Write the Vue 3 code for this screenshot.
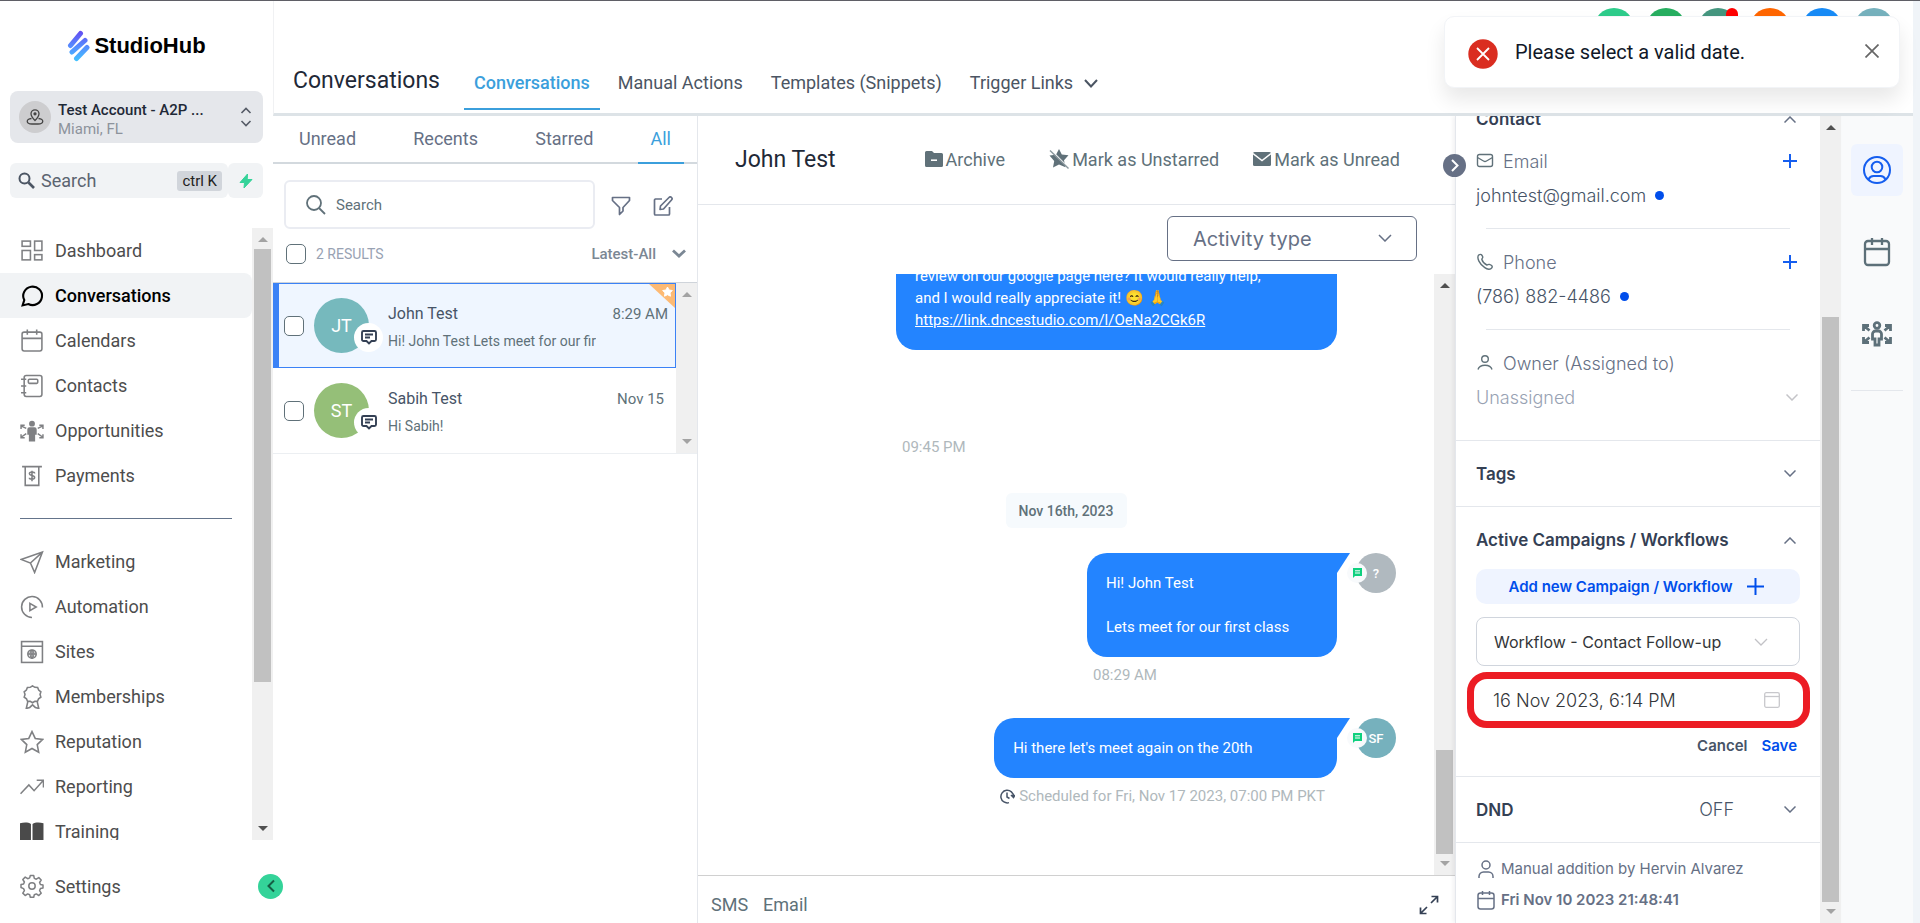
<script setup>
import { ref } from "vue";

const mainNav = [
  { name: "Dashboard", icon: '<rect x="2" y="2" width="8" height="5"/><rect x="14" y="2" width="7" height="9"/><rect x="2" y="11" width="8" height="9"/><rect x="14" y="15" width="7" height="5"/>' },
  { name: "Conversations", icon: '<path d="M2.500 20.500l1.600-5.100A9 8.800 0 1 1 8 19.200z" stroke-width="2"/>' },
  { name: "Calendars", icon: '<rect x="2" y="3" width="19" height="18" rx="2"/><path d="M2 9h19M7 .5v5M16 .5v5"/>' },
  { name: "Contacts", icon: '<rect x="4" y="1.500" width="17" height="20" rx="2"/><rect x="8" y="5" width="9" height="4" rx="1"/><path d="M1 5h5M1 11.500h5M1 18h5"/>' },
  { name: "Opportunities", icon: '<g fill="currentColor" stroke="none"><circle cx="11.500" cy="4.500" r="2.800"/><path d="M9 8h5a2 2 0 0 1 2 2v5h-1.500v6.500h-6V15H7v-5a2 2 0 0 1 2-2z"/></g><path d="M6 9L1 6.500M1 9.500V6h3.500M6 14l-5 3.500M1 14.500V18h3.500M17 9l5-2.500M22 9.500V6h-3.500M17 14l5 3.500M22 14.500V18h-3.500" stroke-width="1.400"/>' },
  { name: "Payments", icon: '<path d="M2 2.500h19M5 2.500v18h13v-18"/><path d="M14 9c0-1.500-5-2-5 .3 0 2.400 5 1.200 5 3.700 0 2.200-5 2-5 .2M11.500 6.500v10"/>' },
];

const moreNav = [
  { name: "Marketing", icon: '<path d="M1 9L21.500 2 14 21.500l-4-9zM10 12.500L21.500 2"/>' },
  { name: "Automation", icon: '<path d="M11.500 21.500A10 10 0 1 1 21.500 12"/><path d="M9.500 8l6 3.500-6 3.500z"/>' },
  { name: "Sites", icon: '<rect x="1.500" y="1.500" width="20" height="20"/><path d="M1.500 6h20M7.500 13.500h8M11.500 9.500v8"/><circle cx="11.500" cy="13.500" r="4"/><path d="M11.500 9.500c-2.500 2-2.500 6 0 8 2.500-2 2.500-6 0-8" stroke-width="1"/>' },
  { name: "Memberships", icon: '<path d="M12 .8l2.200 1.400 2.700.1 1 2.500 2.100 1.700-.8 2.500.8 2.600-2.200 1.600-1 2.400-2.600.1L12 17l-2.200-1.300-2.600-.1-1-2.400L4 11.600 4.800 9 4 6.500l2.100-1.700 1-2.500 2.700-.1z"/><path d="M7.500 16L6 22.500l3.300-1L12 19l2.700 2.500 3.300 1L16.500 16"/>' },
  { name: "Reputation", icon: '<path d="M11.500 1.500l3.100 6.600 7.100.9-5.200 5 1.400 7.300-6.400-3.600-6.400 3.600L6.500 14 1.300 9l7.100-.9z"/>' },
  { name: "Reporting", icon: '<path d="M.5 18l8-8.500 5 5.500L22.500 5M16 5h6.500v7"/>' },
  { name: "Training", icon: '<g fill="#4a4a4a" stroke="none"><path d="M0 3c4-1 8-1 10.500.8V21C8 19.500 4 19 0 20z"/><path d="M22.500 3c-4-1-8-1-10.500.8V21c2.500-1.500 6.500-2 10.500-1z"/></g>' },
];

const topTabs = ["Conversations", "Manual Actions", "Templates (Snippets)", "Trigger Links"];
const filters = ["Unread", "Recents", "Starred", "All"];
const circles = ["#2ecc8b", "#27ae60", "#45967f", "#ff6600", "#188bf6", "#76b1bd"];

const threads = ref([
  { id: 1, initials: "JT", name: "John Test", text: "Hi! John Test Lets meet for our first class", time: "8:29 AM", color: "#76b9bd", active: true },
  { id: 2, initials: "ST", name: "Sabih Test", text: "Hi Sabih!", time: "Nov 15", color: "#95bf78", active: false },
]);

const search = ref("");
const date = ref("16 Nov 2023, 6:14 PM");
const showToast = ref(true);
</script>

<template>
  <div class="app">
    <aside class="sidebar">
      <div class="logo">
        <svg width="23" height="32" viewBox="0 0 23 32">
          <defs>
            <linearGradient id="logoFill" x1="0" y1="0" x2="0" y2="32" gradientUnits="userSpaceOnUse">
              <stop offset="0" stop-color="#6547f0" />
              <stop offset=".55" stop-color="#5591ff" />
              <stop offset="1" stop-color="#3fc6ff" />
            </linearGradient>
          </defs>
          <g stroke="url(#logoFill)" stroke-width="5" stroke-linecap="round">
            <path d="M3.500 15.500L13.500 3.500M5 22L18 10.500M9.500 28.500L20 17.500" />
          </g>
        </svg>
        <span>StudioHub</span>
      </div>

      <button class="account">
        <span class="account-pin">
          <svg width="18" height="18" viewBox="0 0 18 18" fill="none" stroke="#444" stroke-width="1.300">
            <path d="M9 12.500C6.500 10 5 8 5 5.800a4 4 0 0 1 8 0C13 8 11.500 10 9 12.500z" />
            <circle cx="9" cy="5.800" r="1" fill="#444" />
            <path d="M5.500 10.500C-.5 11 0 16 6 16h6c6 0 6.500-5 .5-5.500" />
          </svg>
        </span>
        <span class="account-text">
          <b>Test Account - A2P ...</b>
          <small>Miami, FL</small>
        </span>
        <svg width="12" height="20" viewBox="0 0 12 20" fill="none" stroke="#555b66" stroke-width="1.600"><path d="M1.500 6L6 1.500 10.500 6M1.500 14L6 18.500 10.500 14" /></svg>
      </button>

      <div class="quick">
        <label class="quick-search">
          <svg width="18" height="18" viewBox="0 0 18 18" fill="none" stroke="#4b5563" stroke-width="2"><circle cx="6.500" cy="6.500" r="5" /><path d="M10.500 10.500L16 16" stroke-width="2.600" /></svg>
          <input type="text" placeholder="Search" aria-label="Search menu" />
          <kbd>ctrl K</kbd>
        </label>
        <button class="bolt" aria-label="Quick actions">
          <svg width="14" height="16" viewBox="0 0 14 16" fill="#34d399" stroke="#34d399" stroke-linejoin="round"><path d="M8.500 1L1 9.500h4.500L5 15l8-8.500H8.200z" /></svg>
        </button>
      </div>

      <div class="nav-wrap">
        <nav class="nav">
          <a v-for="item in mainNav" :key="item.name" href="#" :class="{ active: item.name === 'Conversations' }">
            <svg width="24" height="24" viewBox="0 0 23 23" fill="none" stroke="currentColor" stroke-width="1.500" v-html="item.icon"></svg>
            <span>{{ item.name }}</span>
          </a>
          <hr />
          <a v-for="item in moreNav" :key="item.name" href="#">
            <svg width="24" height="24" viewBox="0 0 23 23" fill="none" stroke="currentColor" stroke-width="1.500" v-html="item.icon"></svg>
            <span>{{ item.name }}</span>
          </a>
        </nav>
        <div class="bar">
          <i class="arrow up"></i>
          <div class="thumb nav-thumb"></div>
          <i class="arrow down dark"></i>
        </div>
      </div>

      <div class="settings">
        <a href="#">
          <svg width="24" height="24" viewBox="0 0 24 24" fill="none" stroke="currentColor" stroke-width="1.500" stroke-linejoin="round">
            <path d="M10.300 1.500h3.400l.6 2.900 2 .8 2.500-1.600 2.400 2.400-1.600 2.500.8 2 2.600.5v3l-2.600.6-.8 2 1.600 2.500-2.400 2.400-2.500-1.600-2 .8-.6 2.500h-3.400l-.6-2.500-2-.8-2.500 1.600-2.400-2.400 1.600-2.500-.8-2L1 13.500v-3l2.600-.5.8-2L2.800 5.500l2.400-2.400 2.500 1.600 2-.8z" />
            <circle cx="12" cy="12" r="3.200" />
          </svg>
          <span>Settings</span>
        </a>
        <button class="collapse" aria-label="Collapse menu">
          <svg width="10" height="14" viewBox="0 0 10 14" fill="none" stroke="#155e45" stroke-width="2"><path d="M8 1.500L2.500 7 8 12.500" /></svg>
        </button>
      </div>
    </aside>

    <div class="main">
      <header class="topbar">
        <h1>Conversations</h1>
        <nav class="tabs">
          <a v-for="(tab, i) in topTabs" :key="tab" href="#" :class="{ active: i === 0 }">
            {{ tab }}
            <svg v-if="i === 3" width="14" height="9" viewBox="0 0 14 9" fill="none" stroke="#4b5563" stroke-width="2"><path d="M1 1l6 6.500L13 1" /></svg>
          </a>
        </nav>
        <div class="circles">
          <button v-for="(c, i) in circles" :key="c" :style="{ background: c }" :aria-label="'Shortcut ' + (i + 1)">
            <svg v-if="i === 0" width="20" height="20" viewBox="0 0 20 20"><path d="M8 0h4v20H8z" fill="#fff" /></svg>
            <i v-if="i === 2" class="alert"></i>
          </button>
        </div>
      </header>

      <div class="columns">
        <section class="list">
          <div class="list-tabs">
            <button v-for="f in filters" :key="f" :class="{ active: f === 'All' }">{{ f }}</button>
          </div>
          <div class="list-search">
            <label>
              <svg width="20" height="20" viewBox="0 0 20 20" fill="none" stroke="#607179" stroke-width="1.800"><circle cx="8" cy="8" r="7" /><path d="M13 13l6 6" /></svg>
              <input v-model="search" type="text" placeholder="Search" aria-label="Search conversations" />
            </label>
            <button aria-label="Filter">
              <svg width="20" height="20" viewBox="0 0 20 20" fill="none" stroke="#667085" stroke-width="1.700" stroke-linejoin="round"><path d="M1.500 1.500h17v3L12 11.500V15l-3.500 3.500v-7l-7-7z" /></svg>
            </button>
            <button aria-label="New message">
              <svg width="20" height="20" viewBox="0 0 20 20" fill="none" stroke="#667085" stroke-width="1.700" stroke-linejoin="round"><path d="M9 3H2.500A1.200 1.200 0 0 0 1.500 4v14a1 1 0 0 0 1 1h13a1 1 0 0 0 1-1v-7" /><path d="M7 13.500l.5-3.500L16 1.500a1.500 1.500 0 0 1 2.500 2.500L10.500 13z" /></svg>
            </button>
          </div>
          <div class="results">
            <input id="all" type="checkbox" />
            <label for="all">2 RESULTS</label>
            <button>Latest-All
              <svg width="14" height="9" viewBox="0 0 14 9" fill="none" stroke="#7b8794" stroke-width="2.800"><path d="M1 1.500l6 5.500 6-5.500" /></svg>
            </button>
          </div>
          <div class="threads-wrap">
            <ul class="threads">
              <li v-for="t in threads" :key="t.id" :class="{ active: t.active }">
                <input type="checkbox" :aria-label="'Select ' + t.name" />
                <div class="avatar" :style="{ background: t.color }">
                  {{ t.initials }}
                  <span class="chan">
                    <svg width="16" height="15" viewBox="0 0 16 15" fill="none" stroke="#344054" stroke-width="1.900"><path d="M1 2.500A1.500 1.500 0 0 1 2.500 1h11A1.500 1.500 0 0 1 15 2.500v7a1.500 1.500 0 0 1-1.500 1.500H10.500L8 13.500 5.500 11h-3A1.500 1.500 0 0 1 1 9.500zM4 4.500h8M4 7.500h5" /></svg>
                  </span>
                </div>
                <div class="thread-text">
                  <div class="thread-top"><strong>{{ t.name }}</strong><time>{{ t.time }}</time></div>
                  <p>{{ t.text }}</p>
                </div>
                <svg v-if="t.active" class="corner" width="26" height="24" viewBox="0 0 26 24"><path d="M0 0h26v24z" fill="#fdba74" /><path d="M18.500 3l1.500 3 3.300.5-2.300 2.400.5 3.300-3-1.500-3 1.500.5-3.300-2.300-2.400L17 6z" fill="#fff" stroke="#fff" stroke-linejoin="round" /></svg>
              </li>
            </ul>
            <div class="bar">
              <i class="arrow up"></i>
              <i class="arrow down"></i>
            </div>
          </div>
        </section>

        <section class="chat">
          <div class="chat-head">
            <h2>John Test</h2>
            <button>
              <svg width="18" height="16" viewBox="0 0 18 16"><path d="M1.500 0H7l2 2h7.500A1.500 1.500 0 0 1 18 3.500v11a1.500 1.500 0 0 1-1.500 1.500h-15A1.500 1.500 0 0 1 0 14.500v-13A1.500 1.500 0 0 1 1.500 0z" fill="#607179" /><path d="M6 9.200h6" stroke="#fff" stroke-width="1.600" /></svg>
              Archive
            </button>
            <button>
              <svg width="20" height="20" viewBox="0 0 20 20"><path d="M10 0l2.800 5.500 6.700.7-4.500 5 1.500 7L10 15.500l-6 3 1.200-6.500L.5 6.500l6.500-.8z" fill="#607179" /><path d="M2 1l18 18" stroke="#fff" stroke-width="1.200" /><path d="M1 1.500l18.500 18" stroke="#8a979d" stroke-width="1.400" /></svg>
              Mark as Unstarred
            </button>
            <button>
              <svg width="18" height="14" viewBox="0 0 18 14"><rect width="18" height="14" rx="1.500" fill="#607179" /><path d="M0 1.500l9 7 9-7" fill="none" stroke="#fff" stroke-width="1.400" /></svg>
              Mark as Unread
            </button>
          </div>

          <div class="chat-filter">
            <div class="select">
              <select aria-label="Activity type"><option>Activity type</option></select>
              <svg width="14" height="8" viewBox="0 0 14 8" fill="none" stroke="#667085" stroke-width="1.500"><path d="M1 1l6 6 6-6" /></svg>
            </div>
          </div>

          <div class="log-wrap">
            <div class="log">
              <div class="msg first">
                <div class="stack">
                  <div class="bubble">Hey! Would you be so kind to leave us a<br />review on our google page here? It would really help,<br />and I would really appreciate it! 😊 🙏<br /><a href="#">https://link.dncestudio.com/l/OeNa2CGk6R</a></div>
                  <time>09:45 PM</time>
                </div>
              </div>
              <div class="day">Nov 16th, 2023</div>
              <div class="msg second">
                <div class="stack">
                  <div class="bubble tail">Hi! John Test<br /><br />Lets meet for our first class</div>
                  <time>08:29 AM</time>
                </div>
                <div class="face grey">?
                  <span><svg width="9" height="10" viewBox="0 0 9 10"><path d="M0 0h9v8H2L0 10z" fill="#0fd07f" /><path d="M2 2.800h5M2 5h5" stroke="#fff" /></svg></span>
                </div>
              </div>
              <div class="msg">
                <div class="stack">
                  <div class="bubble tail">Hi there let's meet again on the 20th</div>
                  <time>
                    <svg width="15" height="15" viewBox="0 0 15 15" fill="none" stroke="#475467" stroke-width="1.500"><path d="M9 13.600A6.300 6.300 0 1 1 13.500 7.500M7 3.500V8l2.500 1.500M11 6l2.500 2.500L15 6" /></svg>
                    Scheduled for Fri, Nov 17 2023, 07:00 PM PKT
                  </time>
                </div>
                <div class="face teal">SF
                  <span><svg width="9" height="10" viewBox="0 0 9 10"><path d="M0 0h9v8H2L0 10z" fill="#0fd07f" /><path d="M2 2.800h5M2 5h5" stroke="#fff" /></svg></span>
                </div>
              </div>
            </div>
            <div class="bar">
              <i class="arrow up dark"></i>
              <div class="thumb log-thumb"></div>
              <i class="arrow down"></i>
            </div>
          </div>

          <div class="composer">
            <button>SMS</button>
            <button>Email</button>
            <button class="expand" aria-label="Expand">
              <svg width="20" height="20" viewBox="0 0 20 20" fill="none" stroke="#344054" stroke-width="1.700"><path d="M12 8l6.500-6.500M12.500 1.500h6v6M8 12l-6.500 6.500M1.500 12.500v6h6" /></svg>
            </button>
          </div>
        </section>

        <section class="details">
          <button class="toggle" aria-label="Hide details">
            <svg width="8" height="13" viewBox="0 0 8 13" fill="none" stroke="#fff" stroke-width="2"><path d="M1 1l5.500 5.500L1 12" /></svg>
          </button>
          <div class="panel">
            <div class="group contact">
              <div class="row head"><h3>Contact</h3><svg class="chev" viewBox="0 0 12 7"><path d="M.5 6.500L6 1l5.500 5.500" /></svg></div>
              <div class="row label">
                <svg width="18" height="18" viewBox="0 0 18 18"><rect x="1.500" y="2.500" width="15" height="12" rx="2" /><path d="M1.500 5.500L7.500 9a3 3 0 0 0 3 0l6-3.500" /></svg>
                <span>Email</span>
                <button aria-label="Add email"><svg width="14" height="14" viewBox="0 0 14 14"><path d="M7 0v14M0 7h14" /></svg></button>
              </div>
              <div class="row value">johntest@gmail.com<i></i></div>
              <hr />
              <div class="row label">
                <svg width="18" height="18" viewBox="0 0 18 18"><path d="M3 1.800c1.800-1 3 0 3.700 2 .4 1.200-.9 1.700-.9 2.500C6.500 9 8.700 11 10.800 12c.9.300 1.400-1 2.500-.6 2.200.8 3.700 1.700 2.500 3.400-1.400 2.200-4.500 1.600-7-.2-2.600-1.700-4.700-4-5.900-6.500C1.700 5.500 1.500 3 3 1.800z" /></svg>
                <span>Phone</span>
                <button aria-label="Add phone"><svg width="14" height="14" viewBox="0 0 14 14"><path d="M7 0v14M0 7h14" /></svg></button>
              </div>
              <div class="row value">(786) 882-4486<i></i></div>
              <hr />
              <div class="row label">
                <svg width="18" height="18" viewBox="0 0 18 18"><circle cx="9" cy="5" r="3.300" /><path d="M2 15.500c1-3.500 3.500-4.200 7-4.200s6 .7 7 4.200" /></svg>
                <span>Owner (Assigned to)</span>
              </div>
              <div class="row value none">Unassigned<svg class="chev" viewBox="0 0 12 7"><path d="M.5 .5L6 6 11.500 .5" /></svg></div>
            </div>

            <div class="group row section">
              <h3>Tags</h3><svg class="chev" viewBox="0 0 12 7"><path d="M.5 .5L6 6 11.500 .5" /></svg>
            </div>

            <div class="group flows">
              <div class="row section"><h3>Active Campaigns / Workflows</h3><svg class="chev" viewBox="0 0 12 7"><path d="M.5 6.500L6 1l5.500 5.500" /></svg></div>
              <button class="add">Add new Campaign / Workflow
                <svg width="17" height="17" viewBox="0 0 17 17"><path d="M8.500 0v17M0 8.500h17" stroke="#004eeb" stroke-width="2" /></svg>
              </button>
              <div class="select flow">
                <select aria-label="Workflow"><option>Workflow - Contact Follow-up</option></select>
                <svg width="14" height="8" viewBox="0 0 14 8" fill="none" stroke="#c2c2c6" stroke-width="1.300"><path d="M1 1l6 6 6-6" /></svg>
              </div>
              <div class="date">
                <input v-model="date" type="text" aria-label="Start date" />
                <svg width="16" height="16" viewBox="0 0 16 16" fill="none" stroke="#c8c8cc" stroke-width="1.300"><rect x=".7" y=".7" width="14.600" height="14.600" rx="1.500" /><path d="M.7 4.500h14.600" /></svg>
              </div>
              <div class="actions"><button>Cancel</button><button class="save">Save</button></div>
            </div>

            <div class="group row section">
              <h3>DND</h3><span class="off">OFF</span><svg class="chev" viewBox="0 0 12 7"><path d="M.5 .5L6 6 11.500 .5" /></svg>
            </div>

            <div class="audit">
              <p>
                <svg width="20" height="20" viewBox="0 0 20 20" fill="none" stroke="#667085" stroke-width="1.500"><circle cx="10" cy="6" r="4" /><path d="M3 19v-1.500A4.500 4.500 0 0 1 7.500 13h5a4.500 4.500 0 0 1 4.500 4.500V19" /></svg>
                Manual addition by Hervin Alvarez
              </p>
              <p class="strong">
                <svg width="20" height="20" viewBox="0 0 20 20" fill="none" stroke="#667085" stroke-width="1.500"><rect x="2" y="3" width="16" height="16" rx="2.500" /><path d="M2 8.500h16M6.500 1v4M13.500 1v4" /></svg>
                Fri Nov 10 2023 21:48:41
              </p>
            </div>
          </div>
          <div class="bar">
            <i class="arrow up dark"></i>
            <div class="thumb panel-thumb"></div>
            <i class="arrow down"></i>
          </div>
        </section>

        <aside class="rail">
          <button class="active" aria-label="Contact">
            <svg width="30" height="30" viewBox="0 0 30 30" fill="none" stroke="#155eef" stroke-width="2"><circle cx="15" cy="15" r="13" /><circle cx="15" cy="12" r="5.300" /><path d="M6.500 24.500c1-2.300 2.500-3.500 5-3.500h7c2.500 0 4 1.200 5 3.500" /></svg>
          </button>
          <button aria-label="Appointments">
            <svg width="28" height="30" viewBox="0 0 28 30" fill="none" stroke="#5d7079" stroke-width="2.300"><rect x="2" y="4" width="24" height="24" rx="3" /><path d="M2 12h24M9 1v7M19 1v7" /></svg>
          </button>
          <button aria-label="Opportunities">
            <svg width="32" height="28" viewBox="0 0 32 28" fill="none" stroke="#5d7079" stroke-width="2.800"><circle cx="16" cy="5.500" r="2.800" /><path d="M14.500 11h3a3 3 0 0 1 3 3v5H18v6h-4v-6h-2.500v-5a3 3 0 0 1 3-3z" /><path d="M2.500 11V5.500H8M2.500 5.500l6 5M2.500 17v5.500H8M2.500 22.500l6-5M29.500 11V5.500H24M29.500 5.500l-6 5M29.500 17v5.500H24M29.500 22.500l-6-5" /></svg>
          </button>
          <hr />
        </aside>
      </div>
    </div>

    <div v-if="showToast" class="toast" role="alert">
      <svg class="cross" width="30" height="30" viewBox="0 0 30 30"><circle cx="15" cy="15" r="14.700" fill="#da2d20" /><path d="M9 9l12 12M21 9L9 21" stroke="#fff" stroke-width="1.800" /></svg>
      <span>Please select a valid date.</span>
      <button aria-label="Close" @click="showToast = false">
        <svg width="14" height="14" viewBox="0 0 14 14" stroke="#666" stroke-width="1.700"><path d="M.5 .5l13 13M13.500 .5l-13 13" /></svg>
      </button>
    </div>
  </div>
</template>

<style>
body {
  margin: 0;
  background: #f0f4f8;
}
</style>

<style scoped>
* {
  box-sizing: border-box;
}

.app {
  position: relative;
  display: flex;
  height: 100vh;
  overflow: hidden;
  border-top: 1px solid #5f5f66;
  font-family: Roboto, "Liberation Sans", sans-serif;
  color: #607179;
}

button,
input,
select {
  font: inherit;
  color: inherit;
  border: 0;
  padding: 0;
  background: none;
}

button {
  cursor: pointer;
}

a {
  color: inherit;
  text-decoration: none;
}

svg {
  flex: none;
}

h1,
h2,
h3,
p,
ul {
  margin: 0;
  padding: 0;
  font-weight: 400;
}

hr {
  border: 0;
  margin: 0;
}

/* sidebar */
.sidebar {
  width: 273px;
  flex: none;
  display: flex;
  flex-direction: column;
  background: #fff;
}

.logo {
  display: flex;
  justify-content: center;
  align-items: center;
  gap: 4px;
  height: 90px;
  font-family: "Liberation Sans", Arial, sans-serif;
  font-size: 22px;
  font-weight: 700;
  color: #000;
}

.account {
  display: flex;
  align-items: center;
  height: 52px;
  margin: 0 10px 20px;
  padding: 0 11px 0 9px;
  border-radius: 8px;
  background: #e5e7eb;
  text-align: left;
}

.account-pin {
  display: flex;
  align-items: center;
  justify-content: center;
  width: 32px;
  height: 32px;
  border-radius: 50%;
  background: #cdcdcf;
}

.account-text {
  flex: 1;
  padding: 5px 0 0 7px;
}

.account-text b,
.account-text small {
  display: block;
  font-size: 15px;
  line-height: 19px;
  font-weight: 400;
  color: #8d939c;
}

.account-text b {
  font-weight: 500;
  color: #1f2937;
}

.quick {
  display: flex;
  height: 35px;
  margin: 0 10px 30px;
}

.quick-search {
  flex: 1;
  display: flex;
  align-items: center;
  gap: 5px;
  min-width: 0;
  padding: 0 6px 0 8px;
  border-radius: 6px;
  background: #f1f3f5;
  color: #5b6470;
  font-size: 18px;
}

.quick-search input {
  flex: 1;
  min-width: 0;
}

input::placeholder {
  color: inherit;
  opacity: 1;
}

kbd {
  padding: 0 5px;
  border-radius: 3px;
  background: #d1d5db;
  color: #222;
  font-family: inherit;
  font-size: 15px;
  line-height: 20px;
}

.bolt {
  width: 35px;
  border-radius: 6px;
  background: #f1f3f5;
  line-height: 0;
}

.nav-wrap {
  flex: 1;
  min-height: 0;
  display: flex;
}

.nav {
  flex: 1;
  overflow: hidden;
}

.nav a,
.settings a {
  display: flex;
  align-items: center;
  gap: 11px;
  height: 45px;
  padding-left: 20px;
  color: #7f8083;
}

.nav span,
.settings span {
  font-size: 18px;
  color: #4d4d4d;
}

.nav a.active {
  border-radius: 0 8px 8px 0;
  background: #f1f3f5;
  color: #000;
}

.nav a.active span {
  color: #000;
  font-weight: 500;
}

.nav hr {
  height: 1px;
  margin: 20px;
  background: #64748b;
}

.settings {
  display: flex;
  align-items: center;
  justify-content: space-between;
  height: 83px;
  padding-top: 9px;
}

.settings a {
  flex: 1;
}

.collapse {
  position: relative;
  z-index: 3;
  width: 25px;
  height: 25px;
  margin-right: -10px;
  border-radius: 50%;
  background: #34d399;
  line-height: 0;
}

/* scroll tracks */
.bar {
  width: 21px;
  flex: none;
  display: flex;
  flex-direction: column;
  align-items: center;
  background: #f0f0f0;
}

.arrow {
  width: 0;
  height: 0;
  margin: 9px 0 7px;
  border: 5px solid transparent;
  border-top-width: 0;
  border-bottom-color: #a3a3a3;
}

.arrow.down {
  margin: auto 0 9px;
  border-top: 5px solid #a3a3a3;
  border-bottom-width: 0;
}

.arrow.dark.up {
  border-bottom-color: #505050;
}

.arrow.dark.down {
  border-top-color: #505050;
}

.thumb {
  width: 17px;
  background: #c1c1c1;
}

.nav-thumb {
  height: 433px;
}

/* header */
.main {
  flex: 1;
  min-width: 0;
  display: flex;
  flex-direction: column;
}

.topbar {
  position: relative;
  z-index: 2;
  display: flex;
  align-items: flex-end;
  height: 115px;
  margin-right: 7px;
  padding: 0 19px 3px;
  border-bottom: 3px solid #dde3e7;
  border-left: 1px solid #f0f1f3;
  background: #fff;
  flex: none;
}

.topbar h1 {
  padding-bottom: 13px;
  margin-right: 24px;
  font-size: 23px;
  line-height: 32px;
  color: #1f2937;
}

.tabs {
  flex: 1;
  display: flex;
}

.tabs a {
  display: flex;
  align-items: center;
  gap: 11px;
  padding: 0 10px 12px;
  margin-right: 8px;
  font-size: 18px;
  line-height: 26px;
  color: #4b5563;
  border-bottom: 2px solid transparent;
}

.tabs a.active {
  color: #3b9fdc;
  border-color: #3b9fdc;
  font-weight: 500;
}

.circles {
  display: flex;
  gap: 12px;
  align-self: flex-start;
  padding-top: 7px;
}

.circles button {
  position: relative;
  width: 40px;
  height: 40px;
  border-radius: 50%;
}

.alert {
  position: absolute;
  top: 0;
  right: 0;
  width: 12px;
  height: 16px;
  border-radius: 6px;
  background: #f00;
}

.columns {
  flex: 1;
  min-height: 0;
  display: flex;
}

/* thread list */
.list {
  width: 425px;
  flex: none;
  background: #fff;
  border-right: 1px solid #e4e7ec;
}

.list-tabs {
  display: flex;
  justify-content: space-between;
  height: 48px;
  padding: 0 13px;
  border-bottom: 2px solid #d3d9de;
  font-size: 18px;
}

.list-tabs button {
  padding: 0 13px 2px;
  margin-bottom: -2px;
  color: #667085;
  border-bottom: 2px solid transparent;
}

.list-tabs button.active {
  color: #3b9fdc;
  border-color: #3b9fdc;
}

.list-search {
  display: flex;
  align-items: center;
  gap: 22px;
  padding: 16px 24px 0 11px;
}

.list-search label {
  flex: 1;
  display: flex;
  align-items: center;
  gap: 10px;
  height: 49px;
  margin-right: -6px;
  padding: 0 20px;
  border: 2px solid #eaecf2;
  border-radius: 6px;
  font-size: 15px;
}

.list-search input {
  flex: 1;
  min-width: 0;
  height: 30px;
}

.list-search button {
  padding-top: 6px;
}

.results {
  display: flex;
  align-items: center;
  height: 54px;
  padding: 0 11px 4px 13px;
  border-bottom: 1px solid #cfd4da;
  color: #98a2b3;
  font-size: 14px;
}

.results label {
  flex: 1;
  padding-left: 10px;
}

.results button {
  display: flex;
  align-items: center;
  gap: 16px;
  font-size: 15px;
  font-weight: 500;
  color: #7b8794;
}

input[type="checkbox"] {
  appearance: none;
  flex: none;
  width: 20px;
  height: 20px;
  margin: 0;
  border: 1px solid #607179;
  border-radius: 5px;
  background: #fff;
}

.threads-wrap {
  display: flex;
  height: 171px;
  border-bottom: 1px solid #eceff2;
}

.threads {
  flex: 1;
  min-width: 0;
  list-style: none;
}

.threads li {
  position: relative;
  display: flex;
  align-items: center;
  height: 85px;
  padding: 0 12px 0 11px;
}

.threads li.active {
  padding: 0 7px 0 5px;
  border: 1px solid #3b82f6;
  border-left-width: 6px;
  background: #eff6ff;
}

.avatar {
  position: relative;
  flex: none;
  display: flex;
  align-items: center;
  justify-content: center;
  width: 55px;
  height: 55px;
  margin: 0 19px 0 10px;
  border-radius: 50%;
  color: #fff;
  font-size: 18px;
}

.chan {
  position: absolute;
  right: -14px;
  bottom: 1px;
  display: flex;
  align-items: center;
  justify-content: center;
  width: 29px;
  height: 29px;
  border-radius: 50%;
  background: #fff;
}

.thread-text {
  flex: 1;
  min-width: 0;
  padding-top: 3px;
}

.thread-top {
  display: flex;
  justify-content: space-between;
  line-height: 24px;
}

.thread-top strong {
  font-size: 16px;
  font-weight: 400;
  color: #475467;
}

.thread-top time {
  font-size: 15px;
}

.thread-text p {
  width: 208px;
  margin-top: 4px;
  overflow: hidden;
  white-space: nowrap;
  font-size: 14px;
  line-height: 22px;
}

.corner {
  position: absolute;
  top: 0;
  right: 0;
}

/* chat */
.chat {
  flex: 1;
  min-width: 0;
  display: flex;
  flex-direction: column;
  background: #fff;
}

.chat-head {
  display: flex;
  align-items: center;
  height: 89px;
  padding: 0 55px 2px 37px;
  border-bottom: 1px solid #e4e7ec;
  flex: none;
}

.chat-head h2 {
  flex: 1;
  font-size: 23px;
  color: #1f2937;
}

.chat-head button {
  display: flex;
  align-items: center;
  gap: 3px;
  margin-left: 34px;
  font-size: 18px;
}

.chat-head button:nth-child(3) {
  margin-left: 44px;
}

.chat-filter {
  display: flex;
  justify-content: flex-end;
  padding: 11px 38px 13px;
}

.select {
  position: relative;
  width: 250px;
  font-family: Inter, Roboto, sans-serif;
}

.select select {
  appearance: none;
  width: 100%;
  height: 45px;
  padding: 0 40px 0 25px;
  border: 1px solid #667085;
  border-radius: 6px;
  font-size: 20px;
  color: #667085;
}

.select svg {
  position: absolute;
  top: 18px;
  right: 25px;
}

.log-wrap {
  flex: 1;
  min-height: 0;
  display: flex;
}

.log {
  flex: 1;
  display: flex;
  flex-direction: column;
  justify-content: flex-end;
  overflow: hidden;
  padding: 0 38px 68px 0;
}

.msg {
  display: flex;
  justify-content: flex-end;
  gap: 19px;
  flex: none;
}

.stack {
  display: flex;
  flex-direction: column;
}

.stack time {
  display: flex;
  align-items: center;
  gap: 4px;
  height: 22px;
  margin-top: 7px;
  padding: 0 12px 0 6px;
  font-size: 15px;
  color: #afb8bc;
}

.first {
  padding-right: 59px;
}

.first .stack {
  width: 441px;
}

.first .stack time {
  margin: 86px 0 35px;
}

.second .stack {
  min-width: 250px;
}

.second .stack time {
  margin-bottom: 32px;
}

.bubble {
  position: relative;
  padding: 19px;
  border-radius: 20px;
  background: #2384ff;
  color: #fff;
  font-size: 15px;
  line-height: 22px;
}

.bubble a {
  text-decoration: underline;
}

.tail {
  border-top-right-radius: 0;
}

.tail::after {
  content: "";
  position: absolute;
  top: 0;
  left: 100%;
  border-top: 20px solid #2384ff;
  border-right: 13px solid transparent;
}

.day {
  align-self: center;
  flex: none;
  height: 35px;
  margin: 0 0 25px 38px;
  padding: 0 13px;
  border-radius: 6px;
  background: #f6fafd;
  font-size: 14px;
  font-weight: 500;
  line-height: 37px;
}

.face {
  position: relative;
  display: flex;
  align-items: center;
  justify-content: center;
  width: 40px;
  height: 40px;
  border-radius: 50%;
  color: #fff;
  font-size: 13px;
  font-weight: 500;
}

.face.grey {
  background: #b0b9bf;
}

.face.teal {
  background: #76b1bd;
}

.face span {
  position: absolute;
  left: -9px;
  top: 10px;
  display: flex;
  align-items: center;
  justify-content: center;
  width: 20px;
  height: 20px;
  border-radius: 50%;
  background: #f8fafc;
}

.log-thumb {
  height: 104px;
  margin-top: auto;
}

.log-thumb + .arrow.down,
.panel-thumb + .arrow.down {
  margin-top: 7px;
}

.composer {
  display: flex;
  align-items: center;
  gap: 15px;
  height: 48px;
  padding: 10px 16px 0 13px;
  border-top: 1px solid #d0d0d0;
  font-size: 18px;
  flex: none;
}

.expand {
  margin-left: auto;
  line-height: 0;
}

/* contact details */
.details {
  position: relative;
  width: 386px;
  flex: none;
  display: flex;
  background: #fff;
  border-left: 1px solid #e4e7ec;
  box-shadow: -2px 0 4px rgba(16, 24, 40, 0.06);
  font-family: Inter, Roboto, sans-serif;
}

.toggle {
  position: absolute;
  left: -13px;
  top: 38px;
  width: 23px;
  height: 23px;
  border-radius: 50%;
  background: #667085;
  line-height: 0;
}

.panel {
  flex: 1;
  overflow: hidden;
}

.group {
  padding: 0 20px;
  border-bottom: 1px solid #e4e7ec;
}

.row {
  display: flex;
  align-items: center;
}

.panel h3 {
  flex: 1;
  font-size: 17px;
  font-weight: 600;
  color: #344054;
}

.chev {
  width: 12px;
  height: 7px;
  margin-right: 4px;
  fill: none;
  stroke: #667085;
  stroke-width: 1.5;
}

.contact {
  height: 337px;
}

.head {
  height: 30px;
  margin-top: -12px;
}

.label {
  gap: 9px;
  height: 52px;
  padding-top: 2px;
  font-size: 18px;
  font-weight: 300;
  color: #667085;
}

.label > svg {
  fill: none;
  stroke: #607179;
  stroke-width: 1.4;
}

.label span {
  flex: 1;
}

.label button {
  margin-right: 3px;
  line-height: 0;
  stroke: #155eef;
  stroke-width: 2;
}

.value {
  height: 18px;
  font-size: 18px;
  font-weight: 300;
  color: #475467;
}

.value i {
  width: 9px;
  height: 9px;
  margin-left: 9px;
  border-radius: 50%;
  background: #004eeb;
}

.value.none {
  justify-content: space-between;
  color: #98a2b3;
}

.value.none .chev {
  margin-right: 2px;
  stroke: #c4c4c8;
}

.contact hr {
  height: 1px;
  margin: 24px 10px 6px;
  background: #e4e7ec;
}

.section {
  height: 66px;
}

.flows {
  height: 270px;
}

.flows .section {
  height: 62px;
  padding-top: 4px;
}

.add {
  display: flex;
  align-items: center;
  justify-content: center;
  gap: 14px;
  width: 100%;
  height: 35px;
  margin-bottom: 13px;
  padding-right: 4px;
  border-radius: 10px;
  background: #eff4ff;
  color: #004eeb;
  font-size: 15px;
  font-weight: 600;
}

.select.flow {
  width: 100%;
}

.flow select {
  height: 49px;
  padding-left: 17px;
  border-color: #d0d5dd;
  border-radius: 8px;
  font-size: 16px;
  color: #333639;
}

.flow svg {
  top: 21px;
  right: 32px;
}

.date {
  display: flex;
  align-items: center;
  height: 56px;
  margin: 6px -10px 6px -9px;
  padding: 0 23px 0 19px;
  border: 7px solid #ec1c24;
  border-radius: 20px;
}

.date input {
  flex: 1;
  min-width: 0;
  font-size: 18px;
  font-weight: 300;
  color: #333639;
}

.actions {
  display: flex;
  justify-content: flex-end;
  gap: 14px;
  padding-right: 3px;
  font-size: 15px;
  line-height: 24px;
  font-weight: 600;
  color: #475467;
}

.save {
  color: #004eeb;
}

.off {
  margin-right: 50px;
  font-size: 18px;
  font-weight: 300;
  color: #475467;
}

.audit {
  padding: 10px 20px;
  font-size: 15px;
  color: #667085;
}

.audit p {
  display: flex;
  align-items: center;
  gap: 5px;
  height: 31px;
}

.audit p.strong {
  font-weight: 600;
}

.panel-thumb {
  height: 585px;
  margin-top: auto;
}

/* right rail */
.rail {
  width: 72px;
  margin-right: 7px;
  flex: none;
  display: flex;
  flex-direction: column;
  align-items: center;
  gap: 30px;
  padding-top: 28px;
  background: #f9fafb;
}

.rail button {
  width: 52px;
  height: 52px;
  border-radius: 6px;
  line-height: 0;
}

.rail button.active {
  background: #eff4ff;
}

.rail hr {
  width: 52px;
  height: 1px;
  background: #e4e7ec;
}

/* toast */
.toast {
  position: absolute;
  z-index: 5;
  top: 15px;
  right: 20px;
  display: flex;
  align-items: center;
  gap: 17px;
  width: 456px;
  height: 72px;
  padding: 0 20px 2px 23px;
  border: 1px solid #f2f4f7;
  border-radius: 10px;
  background: #fff;
  box-shadow: 0 12px 20px rgba(0, 0, 0, 0.09);
  font-size: 20px;
  color: #101828;
}

.toast .cross {
  margin-top: 6px;
}

.toast span {
  flex: 1;
  padding-top: 2px;
}
</style>
